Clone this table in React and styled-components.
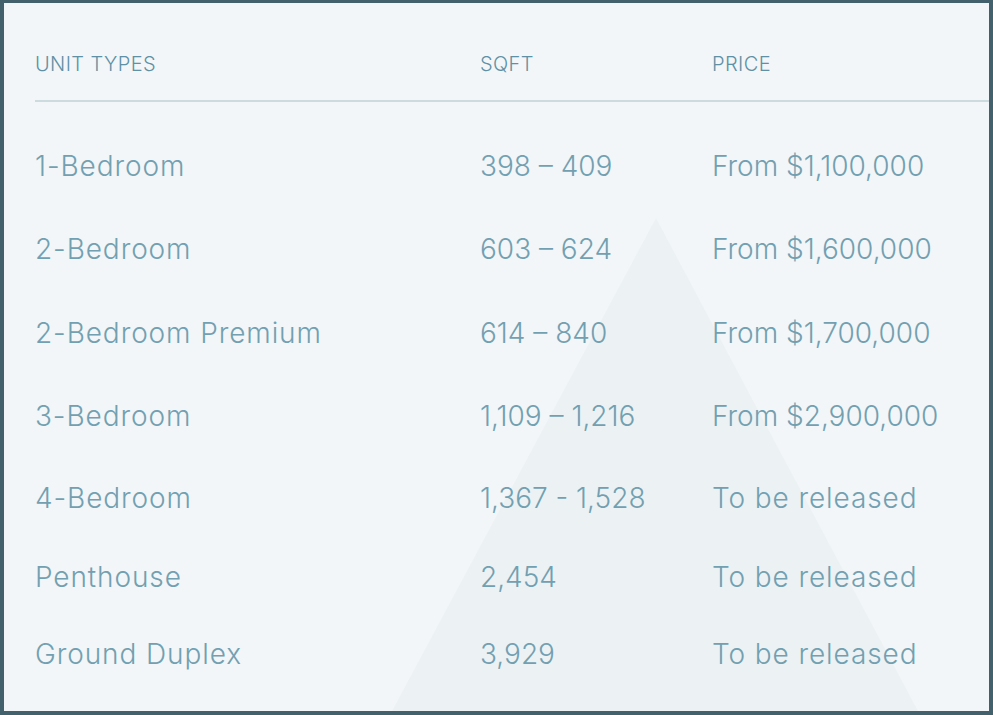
import React from 'react';
import styled, { createGlobalStyle } from 'styled-components';

const GlobalStyle = createGlobalStyle`
  html, body {
    margin: 0;
    padding: 0;
    background: #f2f6f8;
  }
  * {
    box-sizing: border-box;
  }
`;

const Frame = styled.div`
  position: relative;
  width: 993px;
  height: 715px;
  overflow: hidden;
  background: #f2f6f8;
  border-style: solid;
  border-color: #42616d;
  border-width: 3px 4px 4px 4px;
  font-family: Inter, 'Open Sans', sans-serif;
`;

// faint triangle sitting behind the table
const Backdrop = styled.svg`
  position: absolute;
  left: 0;
  top: 0;
  width: 100%;
  height: 100%;
  pointer-events: none;
`;

const Table = styled.div`
  position: relative;
  padding-left: 31px;
`;

const HeadRow = styled.div`
  display: grid;
  grid-template-columns: 445px 232px 1fr;
  align-items: center;
  height: 99px;
  border-bottom: 2px solid #cbdbe0;
`;

const HeadCell = styled.div`
  font-size: 20px;
  font-weight: 300;
  color: #5f90a4;
  text-transform: uppercase;
  letter-spacing: 0.4px;
  padding-top: 25px;
`;

const Body = styled.div`
  padding-top: 22px;
`;

const Row = styled.div`
  display: grid;
  grid-template-columns: 445px 232px 1fr;
  align-items: center;
  height: ${({ $h }) => $h}px;
`;

const Cell = styled.div`
  font-size: 28px;
  font-weight: 300;
  letter-spacing: ${({ $tight }) => ($tight ? '0' : '0.9px')};
  color: #72a0b1;
  white-space: nowrap;
`;

const units = [
  ['1-Bedroom', '398 – 409', 'From $1,100,000', 83.5],
  ['2-Bedroom', '603 – 624', 'From $1,600,000', 83.5],
  ['2-Bedroom Premium', '614 – 840', 'From $1,700,000', 83.5],
  ['3-Bedroom', '1,109 – 1,216', 'From $2,900,000', 83.5],
  ['4-Bedroom', '1,367 - 1,528', 'To be released', 80],
  ['Penthouse', '2,454', 'To be released', 77.5],
  ['Ground Duplex', '3,929', 'To be released', 77.5],
];

const hasDigits = (s) => /\d/.test(s);

export default function App() {
  return (
    <Frame>
      <GlobalStyle />
      <Backdrop viewBox="0 0 985 708" preserveAspectRatio="none">
        <polygon points="652,215 388,708 914,708" fill="#ecf2f4" />
      </Backdrop>
      <Table>
        <HeadRow>
          <HeadCell>Unit Types</HeadCell>
          <HeadCell>SQFT</HeadCell>
          <HeadCell>Price</HeadCell>
        </HeadRow>
        <Body>
          {units.map(([name, sqft, price, h]) => (
            <Row key={name} $h={h}>
              <Cell>{name}</Cell>
              <Cell $tight>{sqft}</Cell>
              <Cell $tight={hasDigits(price)}>{price}</Cell>
            </Row>
          ))}
        </Body>
      </Table>
    </Frame>
  );
}
